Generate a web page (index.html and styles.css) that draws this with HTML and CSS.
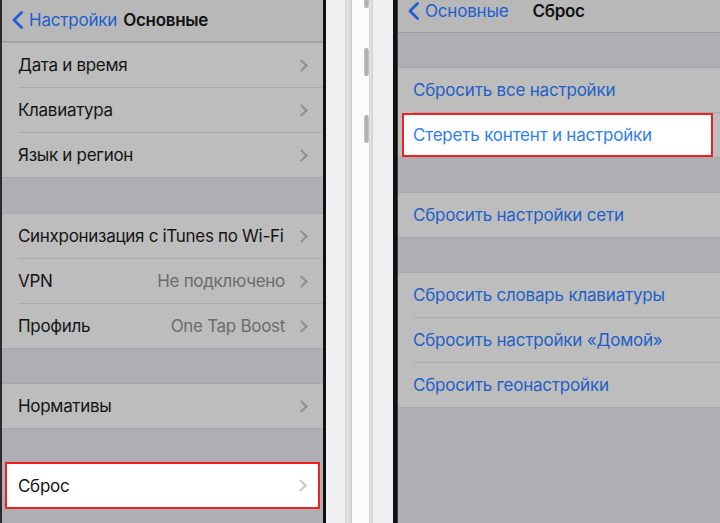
FILE: index.html
```html
<!DOCTYPE html>
<html>
<head>
    <meta charset="utf-8"/>
    <title>Сброс</title>
    <link rel="stylesheet" href="styles.css">
</head>
<body>
<div class="stage">
    <div class="screen screen-left">
        <div class="navbar">
            <a class="back" href="#">
                <svg width="13" height="18" viewBox="0 0 13 18"><polyline points="10.5,1.5 3,9 10.5,16.5" fill="none" stroke="#1d5fd0" stroke-width="2.8" stroke-linecap="round" stroke-linejoin="round"/></svg>
                Настройки
            </a>
            <span class="title">Основные</span>
        </div>
        <div class="group">
            <div class="row"><div class="cell"><span class="label">Дата и время</span><i class="chev"></i></div></div>
            <div class="row"><div class="cell"><span class="label">Клавиатура</span><i class="chev"></i></div></div>
            <div class="row"><div class="cell"><span class="label">Язык и регион</span><i class="chev"></i></div></div>
        </div>
        <div class="gap"></div>
        <div class="group">
            <div class="row"><div class="cell"><span class="label">Синхронизация с iTunes по Wi-Fi</span><i class="chev"></i></div></div>
            <div class="row"><div class="cell"><span class="label">VPN</span><span class="detail">Не подключено</span><i class="chev"></i></div></div>
            <div class="row"><div class="cell"><span class="label">Профиль</span><span class="detail">One Tap Boost</span><i class="chev"></i></div></div>
        </div>
        <div class="gap gap-34"></div>
        <div class="group">
            <div class="row"><div class="cell"><span class="label">Нормативы</span><i class="chev"></i></div></div>
        </div>
        <div class="gap gap-33"></div>
        <div class="marked marked-left">
            <span class="label">Сброс</span><i class="chev"></i>
        </div>
    </div>

    <div class="bezel bezel-left"></div>
    <div class="edge">
        <div class="edge-face"></div>
        <div class="edge-rim"></div>
        <div class="edge-shine">
            <span class="btn btn-1"></span>
            <span class="btn btn-2"></span>
            <span class="btn btn-3"></span>
        </div>
        <div class="edge-rim edge-rim-2"></div>
        <div class="edge-face edge-face-2"></div>
    </div>
    <div class="bezel bezel-right"></div>

    <div class="screen screen-right">
        <div class="navbar navbar-short">
            <a class="back" href="#">
                <svg width="13" height="18" viewBox="0 0 13 18"><polyline points="10.5,1.5 3,9 10.5,16.5" fill="none" stroke="#1d5fd0" stroke-width="2.8" stroke-linecap="round" stroke-linejoin="round"/></svg>
                Основные
            </a>
            <span class="title title-mid">Сброс</span>
        </div>
        <div class="gap gap-34"></div>
        <div class="group">
            <div class="row"><div class="cell"><span class="action">Сбросить все настройки</span></div></div>
            <div class="marked marked-right">
                <span class="action">Стереть контент и настройки</span>
            </div>
        </div>
        <div class="gap gap-34"></div>
        <div class="group">
            <div class="row"><div class="cell"><span class="action">Сбросить настройки сети</span></div></div>
        </div>
        <div class="gap gap-34"></div>
        <div class="group">
            <div class="row"><div class="cell"><span class="action">Сбросить словарь клавиатуры</span></div></div>
            <div class="row"><div class="cell"><span class="action">Сбросить настройки «Домой»</span></div></div>
            <div class="row"><div class="cell"><span class="action">Сбросить геонастройки</span></div></div>
        </div>
    </div>
</div>
</body>
</html>
```

FILE: styles.css
```css
*{box-sizing:border-box;}
html,body{margin:0;padding:0;}
body{background:#000;font-family:"Inter","Roboto","Noto Sans",sans-serif;-webkit-font-smoothing:antialiased;}
a{text-decoration:none;}

.stage{display:flex;width:720px;height:523px;overflow:hidden;}

/* экраны */
.screen{background:#aeaeb3;height:523px;overflow:hidden;}
.screen-left{width:323px;border-left:2px solid #2a2a2a;}
.screen-right{width:323px;border-left:1px solid #3a3a3a;}

.navbar{height:42px;background:#b8b8b9;border-bottom:1px solid #9d9d9f;display:flex;align-items:center;padding:0 0 2px 9px;font-size:17px;}
.navbar-short{height:33px;padding:0 0 11px 9px;}
.back{display:flex;align-items:center;gap:5px;color:#1d5fd0;letter-spacing:-0.2px;}
.back svg{display:block;}
.title{color:#121212;font-weight:600;margin-left:6px;letter-spacing:-0.3px;}
.title-mid{margin-left:24px;}

.gap{height:35px;}
.gap-34{height:34px;}
.gap-33{height:33px;}

.group{background:#bdbdbd;border-top:1px solid #a7a7a9;border-bottom:1px solid #a7a7a9;}
.row{padding-left:16px;}
.screen-right .row{padding-left:15px;}
.cell{height:45px;display:flex;align-items:center;padding-right:16px;border-bottom:1px solid #a9a9a9;font-size:17px;}
.row:last-child .cell{border-bottom:0;height:44px;}

.label{color:#141414;flex:1;letter-spacing:-0.3px;}
.detail{color:#6c6c6c;margin-right:12px;letter-spacing:-0.3px;}
.action{color:#1f5fc8;letter-spacing:-0.2px;}

.chev{width:9px;height:9px;border-right:2px solid #8c8c8c;border-top:2px solid #8c8c8c;transform:rotate(45deg);margin-right:1px;}

/* выделенные строки */
.marked{display:flex;align-items:center;background:#fff;border:2px solid #ee2024;font-size:17px;}
.marked-left{height:47px;margin:0 3px;padding:0 12px 0 11px;}
.marked-left .chev{border-color:#c7c7cc;}
.marked-right{height:44px;margin:0 7px 0 4px;padding-left:9px;}
.marked-right .action{color:#2f7ef0;}

/* корпус телефона между экранами */
.bezel{background:#111;height:523px;}
.bezel-left{width:3px;}
.bezel-right{width:4px;}
.edge{display:flex;width:67px;height:523px;}
.edge-face{width:19px;background:#eef0f3;}
.edge-face-2{width:20px;}
.edge-rim{width:7px;background:linear-gradient(90deg,#cfd0d2,#e4e5e7 40%,#cacbcd);}
.edge-rim-2{width:4px;}
.edge-shine{width:17px;background:#fbfbfb;position:relative;}
.btn{position:absolute;right:0;width:5px;border-radius:3px;background:linear-gradient(90deg,#c4c4c4,#a8a8a8 60%,#cfcfcf);}
.btn-1{top:-4px;height:12px;}
.btn-2{top:48px;height:28px;}
.btn-3{top:115px;height:28px;}
```
